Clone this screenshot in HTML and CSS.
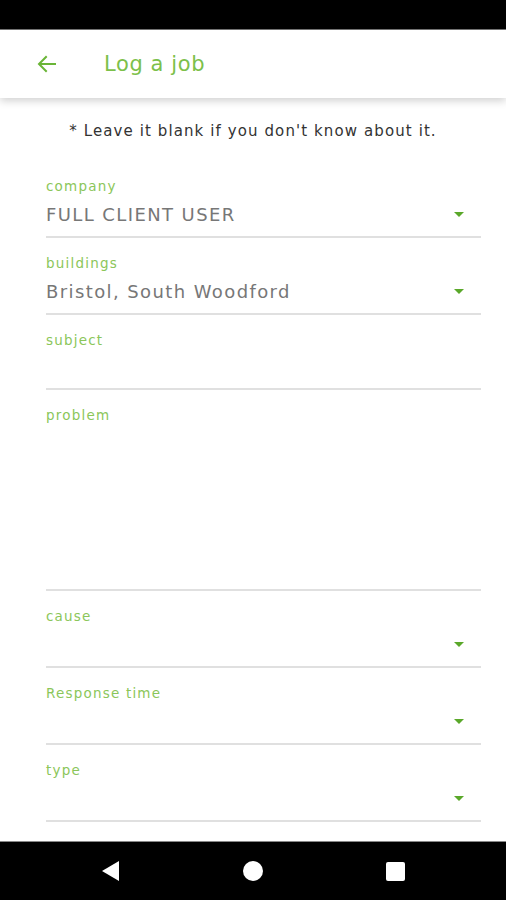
FILE: index.html
```html
<!DOCTYPE html>
<html lang="en">
<head>
    <meta charset="UTF-8">
    <meta name="viewport" content="width=device-width, initial-scale=1.0">
    <title>Log a job</title>
    <link rel="stylesheet" href="styles.css">
</head>
<body>
    <div class="phone">
        <div class="status-bar"></div>

        <header class="app-bar">
            <svg class="back" width="24" height="24" viewBox="0 0 24 24">
                <path d="M20 12H5M11 5l-7 7 7 7" fill="none" stroke="#6ab537" stroke-width="2" stroke-linecap="square"/>
            </svg>
            <h1>Log a job</h1>
        </header>

        <main class="content">
            <p class="note">* Leave it blank if you don't know about it.</p>

            <div class="field select">
                <label>company</label>
                <div class="value">FULL CLIENT USER <span class="caret"></span></div>
            </div>
            <div class="field select">
                <label>buildings</label>
                <div class="value">Bristol, South Woodford <span class="caret"></span></div>
            </div>
            <div class="field">
                <label>subject</label>
                <div class="value input"></div>
            </div>
            <div class="field">
                <label>problem</label>
                <div class="value textarea"></div>
            </div>
            <div class="field select">
                <label>cause</label>
                <div class="value"><span class="caret"></span></div>
            </div>
            <div class="field select">
                <label>Response time</label>
                <div class="value"><span class="caret"></span></div>
            </div>
            <div class="field select">
                <label>type</label>
                <div class="value"><span class="caret"></span></div>
            </div>
        </main>

        <nav class="nav-bar">
            <span class="nav-back"></span>
            <span class="nav-home"></span>
            <span class="nav-recent"></span>
        </nav>
    </div>
</body>
</html>
```

FILE: styles.css
```css
body {
    margin: 0;
    font-family: "DejaVu Sans", sans-serif;
    background-color: #fff;
}
.phone {
    width: 506px;
    height: 900px;
    display: flex;
    flex-direction: column;
    overflow: hidden;
}
.status-bar {
    height: 29px;
    background: #000;
    border-bottom: 1px solid #777;
    flex-shrink: 0;
}
.app-bar {
    height: 68px;
    display: flex;
    align-items: center;
    background: #fff;
    box-shadow: 0 3px 8px rgba(0, 0, 0, 0.18);
    position: relative;
    z-index: 1;
    flex-shrink: 0;
}
.app-bar .back {
    margin-left: 35px;
}
.app-bar h1 {
    margin: 0 0 0 45px;
    font-size: 21px;
    font-weight: normal;
    letter-spacing: 0.6px;
    color: #7cc04a;
}
.content {
    flex: 1;
    padding: 0 25px 0 46px;
    overflow: hidden;
}
.note {
    margin: 0 0 0 -21px;
    padding: 23px 0 20px;
    line-height: 20px;
    text-align: center;
    font-size: 15px;
    letter-spacing: 1.1px;
    color: #333;
}
.field {
    padding-top: 15px;
    border-bottom: 2px solid #e0e0e0;
}
.field label {
    display: block;
    height: 20px;
    line-height: 20px;
    font-size: 13.5px;
    letter-spacing: 1.2px;
    color: #8bc65a;
}
.field .value {
    display: flex;
    align-items: center;
    justify-content: space-between;
    margin-top: 2px;
    margin-bottom: 6px;
    height: 32px;
    font-size: 18px;
    letter-spacing: 1.4px;
    color: #777;
}
.field .value.input {
    height: 30px;
}
.field .value.textarea {
    height: 156px;
}
.caret {
    width: 0;
    height: 0;
    border-left: 5px solid transparent;
    border-right: 5px solid transparent;
    border-top: 5px solid #5aa82a;
    margin-left: auto;
    margin-right: 17px;
}
.nav-bar {
    height: 58px;
    background: #000;
    border-top: 1px solid #888;
    display: flex;
    align-items: center;
    flex-shrink: 0;
    margin-top: auto;
}
.nav-back {
    width: 0;
    height: 0;
    border-top: 10px solid transparent;
    border-bottom: 10px solid transparent;
    border-right: 17px solid #fff;
    margin-left: 102px;
}
.nav-home {
    width: 20px;
    height: 20px;
    border-radius: 50%;
    background: #fff;
    margin-left: 124px;
}
.nav-recent {
    width: 19px;
    height: 19px;
    border-radius: 2px;
    background: #fff;
    margin-left: 123px;
}
```
